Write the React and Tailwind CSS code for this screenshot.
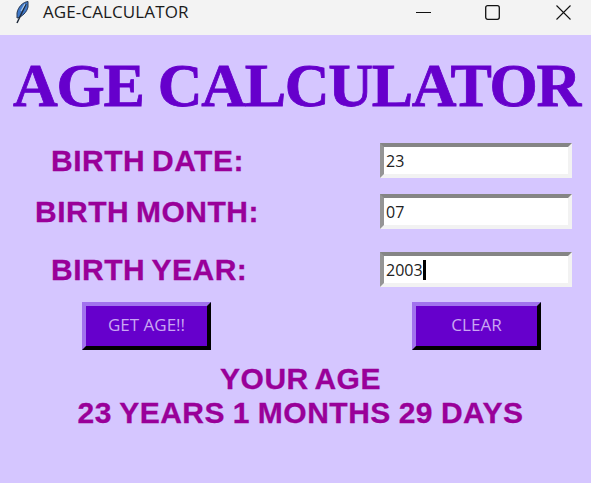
import React from "react";

const labelClass =
  "font-['Liberation_Sans',Arial,sans-serif] font-bold text-[30px] leading-8 tracking-[0.5px] [word-spacing:-2px] [-webkit-text-stroke:0.3px_#990099] text-[#990099] whitespace-nowrap";

const Feather = () => (
  <svg width="16" height="23" viewBox="0 0 16 23" className="ml-[14px] mr-[13px]">
    <path d="M14 0.5 C9 1 4 6 3 12 L3 17 C8 16 13 11 14 6 Z" fill="#3f78c8" stroke="#26364f" strokeWidth="1" />
    <path d="M12 3 L3 22" stroke="#1f2a3a" strokeWidth="1.5" fill="none" />
    <path d="M11 3 L7 10" stroke="#a9c8ee" strokeWidth="1.2" fill="none" />
  </svg>
);

const Entry = ({ value, caret }) => (
  <div className="w-[192px] h-[35px] shrink-0 flex items-center bg-white border-4 border-t-[#858585] border-l-[#959595] border-r-[#f2f2f2] border-b-[#f2f2f2] pl-[2px] font-['Open_Sans',sans-serif] text-[16px] text-[#222]">
    <span>{value}</span>
    {caret && <span className="w-[3px] h-[20px] bg-black" />}
  </div>
);

const Row = ({ label, indent, value, caret, className }) => (
  <div className={"flex items-center justify-between pr-[19px] " + className}>
    <div className={labelClass + " " + indent}>{label}</div>
    <Entry value={value} caret={caret} />
  </div>
);

const Btn = ({ children }) => (
  <button className="w-[129px] h-[48px] pb-[3px] border-[4px] border-t-[#a273ee] border-l-[#a273ee] border-r-black border-b-black bg-[#6600cc] font-['Open_Sans',sans-serif] text-[17px] text-[#c9a6f2]">
    {children}
  </button>
);

export default function App() {
  return (
    <div className="w-[591px] h-[483px] flex flex-col bg-[#d5c6ff] overflow-hidden">
      <div className="h-[35px] shrink-0 flex items-center pb-[11px] bg-[#f3f3f3] font-['Open_Sans',sans-serif] text-[17px] tracking-[0.1px] text-[#1a1a1a]">
        <Feather />
        <span>AGE-CALCULATOR</span>
        <div className="ml-auto flex items-center pr-[20px]">
          <svg width="15" height="15" viewBox="0 0 15 15">
            <path d="M0 7.5 H15" stroke="#111" strokeWidth="1" />
          </svg>
          <svg width="15" height="15" viewBox="0 0 15 15" className="ml-[54px]">
            <rect x="0.7" y="0.7" width="13.6" height="13.6" rx="2" fill="none" stroke="#111" strokeWidth="1.3" />
          </svg>
          <svg width="15" height="15" viewBox="0 0 15 15" className="ml-[56px]">
            <path d="M0.5 0.5 L14.5 14.5 M14.5 0.5 L0.5 14.5" stroke="#111" strokeWidth="1.1" />
          </svg>
        </div>
      </div>

      <h1 className="mt-[15px] pl-[2px] text-center font-['Liberation_Serif',serif] font-bold text-[62px] leading-[70px] tracking-[-1.3px] [-webkit-text-stroke:0.8px_#6600cc] text-[#6600cc] whitespace-nowrap">
        AGE CALCULATOR
      </h1>

      <Row className="mt-[23px]" label="BIRTH DATE:" indent="ml-[51px]" value="23" />
      <Row className="mt-[16px]" label="BIRTH MONTH:" indent="ml-[35px]" value="07" />
      <Row className="mt-[23px]" label="BIRTH YEAR:" indent="ml-[51px]" value="2003" caret />

      <div className="mt-[15px] flex justify-between pl-[82px] pr-[50px]">
        <Btn>GET AGE!!</Btn>
        <Btn>CLEAR</Btn>
      </div>

      <div className={labelClass + " mt-[13px] pl-[10px] text-center"}>YOUR AGE</div>
      <div className={labelClass + " mt-[2px] pl-[10px] text-center"}>
        <span className="[word-spacing:-1px]">23 YEARS 1 MONTHS 29 DAYS</span>
      </div>
    </div>
  );
}
